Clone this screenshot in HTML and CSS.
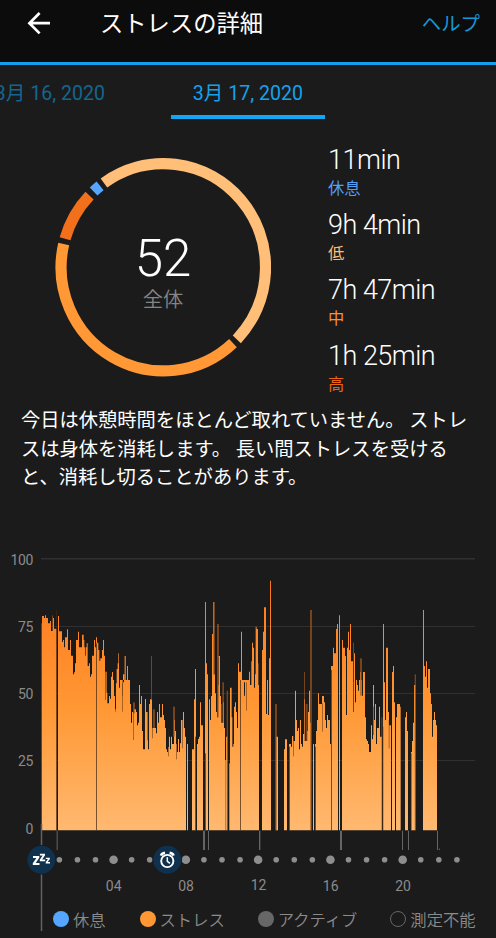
FILE: index.html
```html
<!DOCTYPE html>
<html lang="ja">
<head>
<meta charset="utf-8">
<title>ストレスの詳細</title>
<link rel="stylesheet" href="styles.css">
</head>
<body>
<header class="bar">
  <svg class="back" viewBox="0 0 24 24" width="24" height="24"><path d="M23 12.2H3M12.600 2L2.400 12.200L12.600 22.400" fill="none" stroke="#fff" stroke-width="2.700"/></svg>
  <h1 class="title">ストレスの詳細</h1>
  <a class="help">ヘルプ</a>
</header>
<nav class="tabs">
  <span class="tab tab-prev">3月 16, 2020</span>
  <span class="tab tab-active">3月 17, 2020</span>
</nav>
<section class="summary">
  <div class="gauge">
    <svg class="ring" viewBox="0 0 216 220" width="216" height="220" id="ring"></svg>
    <div class="score"><span class="num">52</span><span class="cap">全体</span></div>
  </div>
  <dl class="times">
    <div class="rest"><dt>11min</dt><dd>休息</dd></div>
    <div class="low"><dt>9h 4min</dt><dd>低</dd></div>
    <div class="mid"><dt>7h 47min</dt><dd>中</dd></div>
    <div class="high"><dt>1h 25min</dt><dd>高</dd></div>
  </dl>
</section>
<p class="note">今日は休憩時間をほとんど取れていません。 ストレ<br>スは身体を消耗します。 長い間ストレスを受ける<br>と、消耗し切ることがあります。</p>
<svg class="chart" id="chart" viewBox="0 0 496 360" width="496" height="360">
  <defs><linearGradient id="heat" gradientUnits="userSpaceOnUse" x1="0" y1="120" x2="0" y2="872">
    <stop offset="0" stop-color="#f9761c"/><stop offset=".2" stop-color="#ff8527"/><stop offset=".5" stop-color="#ff9733"/><stop offset="1" stop-color="#ffb970"/>
  </linearGradient></defs>
  <g fill="#303030"><rect x="41" y="18" width="434" height="1.500"/><rect x="41" y="86" width="434" height="1"/><rect x="41" y="153" width="434" height="1"/><rect x="41" y="220" width="434" height="1"/></g>
  <g class="yaxis" text-anchor="end"><text x="33" y="25">100</text><text x="33" y="92">75</text><text x="33" y="159">50</text><text x="33" y="226">25</text><text x="33" y="293.500">0</text></g>
  <g id="plot" transform="scale(.333333)"></g>
  <g id="dots" fill="#8e8e8e"></g>
  <g class="xaxis" text-anchor="middle"><text x="113.700" y="350.500">04</text><text x="186" y="350.500">08</text><text x="258.500" y="350">12</text><text x="330.700" y="350.500">16</text><text x="403" y="350.500">20</text></g>
  <path d="M41.500 284V391" stroke="#626262" stroke-width="1.500"/>
  <circle cx="41.300" cy="319.800" r="14.800" fill="#1b1b1b"/><circle cx="41.300" cy="319.800" r="14" fill="#10314d"/>
  <g fill="#fff">
    <path d="M33 316H39.300V317.700L35.700 323.100H39.500V325H32.800V323.300L36.400 317.900H33Z"/>
    <path d="M39.900 313.700H45V315.200L42.200 319.600H45.200V321.300H39.800V319.800L42.600 315.400H39.900Z"/>
    <path d="M45.800 317.700H49.900V318.900L47.700 322H50V323.400H45.700V322.200L47.900 319.100H45.800Z"/>
  </g>
  <circle cx="167.300" cy="319.800" r="14.800" fill="#1b1b1b"/><circle cx="167.300" cy="319.800" r="14" fill="#10314d"/>
  <g fill="none" stroke="#fff"><circle cx="167.300" cy="321" r="6.100" stroke-width="1.900"/><path d="M167.300 317.300V321.400L170 323.300" stroke-width="1.500"/><path d="M161 315.600Q161.600 313.400 165 312.800M173.600 315.600Q173 313.400 169.600 312.800" stroke-width="2.500"/></g>
</svg>
<footer class="legend">
  <span class="item"><i class="dot blue"></i>休息</span>
  <span class="item"><i class="dot orange"></i>ストレス</span>
  <span class="item"><i class="dot gray"></i>アクティブ</span>
  <span class="item"><i class="dot hollow"></i>測定不能</span>
</footer>
<script src="chart.js"></script>
</body>
</html>
```
FILE: styles.css
```css
* { box-sizing: border-box; }
body {
  margin: 0; width: 496px; height: 938px; overflow: hidden;
  background: #1b1b1b; color: #fff;
  font-family: Roboto, "Noto Sans CJK JP", sans-serif;
}
.bar {
  display: flex; align-items: center; height: 65px; padding: 0 16px 17px 27px;
  background: #0c0c0c; border-bottom: 3px solid #12a0e8;
}
.title { margin: 2px 0 0 49px; font-size: 23.300px; font-weight: 400; line-height: 44px; }
.help { margin-left: auto; color: #1596d8; font-size: 19.400px; }
.tabs { display: flex; height: 54px; }
.tab {
  flex: none; width: 154px; height: 54px; line-height: 57px; color: #13a2ed;
  font-size: 19.600px; text-align: center; white-space: nowrap;
}
.tab-prev { margin-left: -27px; margin-right: 44px; color: #136690; }
.tab-active { border-bottom: 4px solid #12a6f4; }
.summary { display: flex; height: 282px; padding: 39px 0 0 55px; }
.gauge { display: grid; width: 216px; height: 220px; }
.ring, .score { grid-area: 1 / 1; }
.score { display: flex; flex-direction: column; align-items: center; padding-top: 71px; }
.num { font-size: 51px; font-weight: 300; line-height: 59px; }
.cap { font-size: 20.300px; line-height: 25px; color: #858585; font-weight: 350; }
.times { margin: -14.500px 0 0 57px; }
.times div { height: 65.400px; }
.times dt { font-size: 27px; font-weight: 300; line-height: 32px; letter-spacing: -0.500px; }
.times dd { margin: 0; font-size: 16.300px; line-height: 26px; font-weight: 400; }
.rest dd { color: #529ff5; }
.low dd { color: #ffbe75; }
.mid dd { color: #f79234; }
.high dd { color: #e76617; }
.note { margin: 6px 0 0 21px; height: 133px; font-size: 19.270px; line-height: 28.700px; white-space: nowrap; }
.chart { display: block; overflow: visible; }
.yaxis, .xaxis { fill: #8b8b8b; font-size: 14px; }
.yaxis { letter-spacing: -0.400px; }
.legend { display: flex; height: 38px; padding-left: 53px; }
.item { display: flex; align-items: center; flex: none; height: 38px; font-size: 16.300px; color: #8b8b8b; font-weight: 350; white-space: nowrap; }
.item + .item { margin-left: 34px; }
.item:nth-child(n+3) { margin-left: 33px; }
.dot { width: 16px; height: 16px; border-radius: 50%; margin-right: 4px; }
.blue { background: #55a6ff; }
.orange { background: #ff9735; }
.gray { background: #676767; }
.hollow { border: 1px solid #676767; }
```
FILE: chart.js
```js
const NS = "http://www.w3.org/2000/svg";
function add(parent, tag, attrs) {
  const el = document.createElementNS(NS, tag);
  for (const k in attrs) el.setAttribute(k, attrs[k]);
  parent.appendChild(el);
}

// Stress profile: "x:top" steps in thirds of a pixel; a top of 0 is a gap.
const BASE = 871;
const chunks = [
  [0, "126:228 132:234 135:226 138:234 144:250 150:243 153:273 159:234 162:266 171:0 174:228 177:274 186:306 189:300 192:322 195:292 201:268 204:330 210:300 213:347 219:403 222:397 225:370 228:300 234:275 237:322 246:284 251:300 253:322 255:347 257:322 260:310 263:378 267:370 270:410 273:403 276:347 282:300 285:322 288:292 291:308 295:330 298:362 301:355 306:330 309:300 312:347 315:395 320:458 322:490 327:468 330:476 333:410 336:396 339:420 342:468 345:507 348:430 350:387 353:370 355:340 357:443 360:435 366:467 369:427 372:403 375:348 378:427 381:378 384:420"],
  [360, "0:435 6:467 8:420 9:403 15:372 18:427 21:380 24:420 30:492 33:548 36:516 42:508 48:516 51:556 54:548 57:435 60:492 63:468 66:573 69:628 75:477 78:516 84:628 87:492 90:478 96:564 108:580 111:516 114:548 117:492 120:532 126:492 129:525 132:540 135:564 138:628 141:636 144:621 147:590 150:628 153:590 156:612 162:540 165:573 168:612 171:636 174:597 177:636 180:610 183:540 189:516 192:564 195:590 198:0 201:612 204:0 216:628 222:478 225:387 228:0 231:612 234:597 237:590 240:487 243:556 249:0 255:186 258:370 261:403 264:0 267:478 270:540 273:468 276:282 279:186 282:403 285:460 288:516 291:532 294:348 300:468 303:492 304:548 309:487 312:564 315:0 318:590 322:0 330:443 335:532 337:620 340:612 342:500 345:487 348:516 351:564 354:370 357:395 363:275 366:540 369:516 372:427 381:420"],
  [720, "0:420 3:275 6:540 9:516 12:467 15:427 21:420 27:395 30:435 34:364 36:308 39:323 42:443 45:403 47:260 50:267 54:370 55:435 57:0 66:330 69:275 72:202 78:522 81:420 84:525 87:355 90:122 93:0 108:590 114:0 132:628 135:598 141:0 147:612 153:620 156:588 160:603 165:452 168:540 171:573 174:564 177:628 180:540 183:612 186:620 189:582 192:478 195:603 201:573 204:516 207:452 210:548 213:0 219:612 222:0 225:612 228:573 231:540 234:460 237:492 246:468 252:487 255:540 258:564 261:525 264:540 270:612 273:378 279:323 282:340 288:267 291:252 294:0 297:226 300:0 306:300 309:323 315:348 318:525 321:323 324:275 327:330 330:252 333:364 339:516 342:340 345:487 348:420 351:435 354:452 357:420 360:396"],
  [1080, "3:420 6:467 9:396 15:532 18:598 21:603 24:612 27:636 33:556 36:598 39:435 42:540 45:492 48:612 51:564 57:500 60:590 66:0 69:252 72:427 75:540 78:323 84:516 87:556 93:0 96:396 99:378 102:487 105:0 108:532 111:492 120:500 122:0 135:532 138:516 141:573 144:0 153:636 156:603 159:548 162:435 166:0 189:210 192:378 195:410 198:364 201:443 204:387 210:460 213:492 216:590 219:540 222:516 225:540 228:556 231:0"]
];
let d = "M126 " + BASE;
for (const [off, text] of chunks)
  for (const step of text.split(" ")) {
    const [x, top] = step.split(":").map(Number);
    d += "H" + (off + x) + "V" + (top || BASE);
  }
const plot = document.getElementById("plot");
add(plot, "path", { d: d + "Z", fill: "url(#heat)" });

// Half-covered readings: x, top, width, bottom.
for (const [x, y, w, b] of [
  [156, 226, 3, 273], [372, 348, 6, 420], [399, 487, 6, 520], [453, 348, 3, 480],
  [459, 508, 6, 564], [519, 500, 6, 590], [651, 252, 6, 532], [667, 427, 5, 548],
  [680, 452, 4, 871], [825, 492, 6, 871], [912, 396, 3, 603], [917, 492, 6, 603],
  [930, 210, 6, 871], [1059, 308, 3, 516], [1080, 355, 6, 467], [1144, 532, 3, 871],
  [1244, 403, 4, 871], [639, 186, 6, 403]
]) add(plot, "rect", { x, y, width: w, height: b - y, fill: "#a65b1e", opacity: .65 });

// Thin seams between adjacent readings.
for (const [x, y] of [[168, 210], [288, 310], [720, 420], [867, 620], [945, 620], [993, 390], [1147, 560], [1232, 640], [585, 590], [615, 640]])
  add(plot, "rect", { x, y, width: 3, height: BASE - y, fill: "#402714", opacity: .7 });
for (const [x, y] of [[675, 660], [687, 670]])
  add(plot, "rect", { x, y, width: 3, height: BASE - y, fill: "#5599e6" });
for (const [x, y] of [[315, 395], [345, 430], [366, 430], [399, 515], [432, 540], [441, 516], [456, 510], [504, 564], [528, 573], [546, 540], [654, 350], [738, 427], [879, 564], [897, 540], [966, 490], [1059, 340], [1119, 500], [1166, 540]])
  add(plot, "rect", { x, y, width: 3, height: 85, fill: "#3b210f", opacity: .45 });
add(plot, "rect", { x: 124, y: 250, width: 2, height: 621, fill: "#94592b" });

// Activity ticks under the baseline.
for (const [x, w] of [[170, 3], [609, 6], [624, 3], [777, 4], [1020, 6], [1206, 3], [1224, 3], [1311, 3]])
  add(plot, "rect", { x, y: 872, width: w, height: 58, fill: "#656565" });
add(plot, "rect", { x: 1317, y: 926, width: 3, height: 4, fill: "#656565" });

const dots = document.getElementById("dots");
for (let h = 1; h <= 23; h++)
  add(dots, "circle", { cx: 41.3 + h * 18.07, cy: 319.8, r: h % 4 ? 2.8 : 4.3 });

// Ring segments: start and end in degrees clockwise from the top.
const ring = document.getElementById("ring");
function at(deg) {
  const a = deg * Math.PI / 180;
  return (108.3 + 102.2 * Math.sin(a)).toFixed(2) + " " + (109.3 - 103.6 * Math.cos(a)).toFixed(2);
}
for (const [a, b, color] of [[-35.5, 134, "#ffbf78"], [137, 283, "#ff9835"], [286, 313.8, "#f2701c"], [317, 321.8, "#55a6ff"]])
  add(ring, "path", { d: `M${at(a)}A102.2 103.6 0 ${b - a > 180 ? 1 : 0} 1 ${at(b)}`, fill: "none", stroke: color, "stroke-width": 11.2 });
```
